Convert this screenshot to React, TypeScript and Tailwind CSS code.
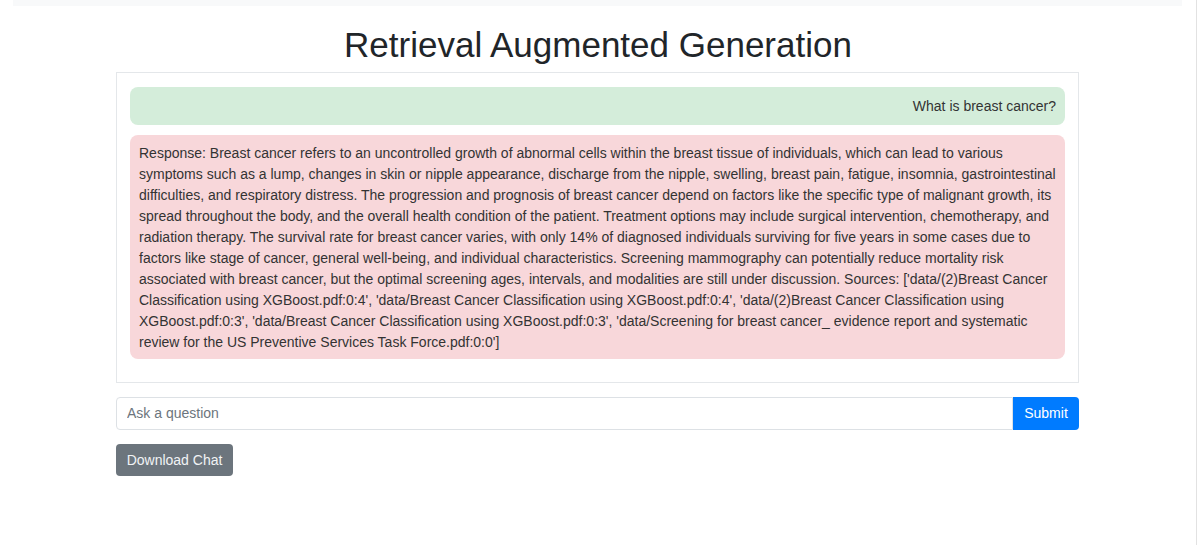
import { useState } from "react";

const RESPONSE =
  "Response: Breast cancer refers to an uncontrolled growth of abnormal cells within the breast tissue of individuals, which can lead to various symptoms such as a lump, changes in skin or nipple appearance, discharge from the nipple, swelling, breast pain, fatigue, insomnia, gastrointestinal difficulties, and respiratory distress. The progression and prognosis of breast cancer depend on factors like the specific type of malignant growth, its spread throughout the body, and the overall health condition of the patient. Treatment options may include surgical intervention, chemotherapy, and radiation therapy. The survival rate for breast cancer varies, with only 14% of diagnosed individuals surviving for five years in some cases due to factors like stage of cancer, general well-being, and individual characteristics. Screening mammography can potentially reduce mortality risk associated with breast cancer, but the optimal screening ages, intervals, and modalities are still under discussion. Sources: ['data/(2)Breast Cancer Classification using XGBoost.pdf:0:4', 'data/Breast Cancer Classification using XGBoost.pdf:0:4', 'data/(2)Breast Cancer Classification using XGBoost.pdf:0:3', 'data/Breast Cancer Classification using XGBoost.pdf:0:3', 'data/Screening for breast cancer_ evidence report and systematic review for the US Preventive Services Task Force.pdf:0:0']";

const App = () => {
  const [question, setQuestion] = useState("");

  return (
    <div className="flex w-[1199px] h-[545px] bg-white font-['Liberation_Sans',Arial,sans-serif] text-[#212529]">
      <div className="flex flex-1 flex-col">
        <div className="mx-[13px] mr-[14px] h-[6px] bg-[#f8f9fa]" />
        <h1 className="mt-[18px] mb-[6px] text-center text-[35px] leading-[42px] font-normal">
          Retrieval Augmented Generation
        </h1>
        <div className="ml-[116px] w-[963px]">
          <div className="border border-[#e4e7ea] px-[13px] pt-[14px] pb-[13px]">
            <div className="mb-[10px] rounded-lg bg-[#d4edda] px-[9px] pt-[9px] pb-2 text-right text-[14px] leading-[21px] text-[#333]">
              What is breast cancer?
            </div>
            <div className="mb-[10px] rounded-lg bg-[#f8d7da] px-[9px] pt-[8px] pb-[6px] text-[14px] leading-[21px] text-[#333]">
              {RESPONSE}
            </div>
          </div>
          <div className="mt-[14px] flex h-[33px]">
            <input
              value={question}
              onChange={(e) => setQuestion(e.target.value)}
              placeholder="Ask a question"
              className="flex-1 rounded-l-[4px] border border-[#dde1e5] px-[10px] text-[14px] text-[#495057] outline-none placeholder:text-[#6c757d]"
            />
            <button className="w-[66px] rounded-r-[4px] bg-[#007bff] text-[14px] text-white">
              Submit
            </button>
          </div>
          <button className="mt-[14px] h-[32px] w-[117px] rounded-[4px] bg-[#6c757d] text-[14px] text-[#f1f3f5]">
            Download Chat
          </button>
        </div>
      </div>
      <div className="w-px bg-[#e2e2e2]" />
      <div className="w-[2px]" />
    </div>
  );
};

export default App;
